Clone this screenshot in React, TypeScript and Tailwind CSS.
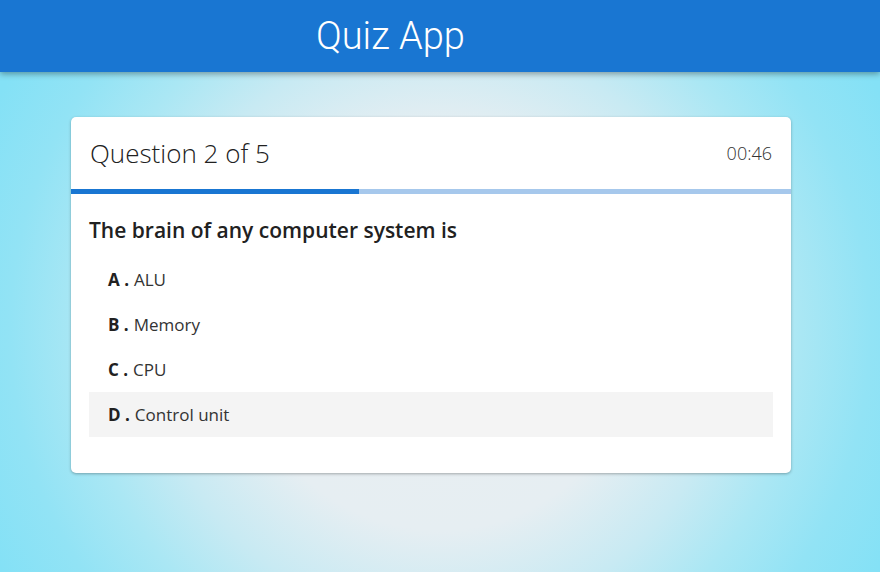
export default function App() {
  const options = [
    { key: "A", text: "ALU" },
    { key: "B", text: "Memory" },
    { key: "C", text: "CPU" },
    { key: "D", text: "Control unit" },
  ]
  const hovered = "D"

  return (
    <div className="min-h-screen bg-[radial-gradient(circle_at_440px_330px,#e9eef1_0px,#e6eef2_200px,#c8eaf3_290px,#aae7f4_360px,#92e3f5_430px,#84e1f6_500px)] font-['Open_Sans',sans-serif] text-[#212121]">
      <header className="h-[72px] bg-[#1976d2] shadow-[0_2px_6px_rgba(0,0,0,0.35)] flex items-center pl-[316px]">
        <h1 className="text-[38px] font-light text-white leading-none font-['Roboto',sans-serif]">Quiz App</h1>
      </header>

      <div className="ml-[71px] mt-[45px] w-[720px] bg-white rounded-[5px] shadow-[0_1px_3px_rgba(0,0,0,0.3)]">
        <div className="h-[72px] flex items-center justify-between px-[19px]">
          <h2 className="text-[26px] font-light">Question 2 of 5</h2>
          <span className="text-[18px] font-light text-[#333]">00:46</span>
        </div>
        <div className="h-[5px] bg-[#a6c8ec]">
          <div className="h-full w-[40%] bg-[#1976d2]" />
        </div>

        <div className="px-[18px] pt-[21px] pb-[36px]">
          <p className="text-[21px] font-semibold leading-[30px] mb-[12px]">The brain of any computer system is</p>
          <ul>
            {options.map((o) => (
              <li
                key={o.key}
                className={`h-[45px] flex items-center pl-[19px] text-[17px] ${
                  o.key === hovered ? "bg-[#f4f4f4]" : ""
                }`}
              >
                <span className="font-bold mr-[5px]">{o.key} .</span>
                <span className="text-[#333]">{o.text}</span>
              </li>
            ))}
          </ul>
        </div>
      </div>
    </div>
  )
}
